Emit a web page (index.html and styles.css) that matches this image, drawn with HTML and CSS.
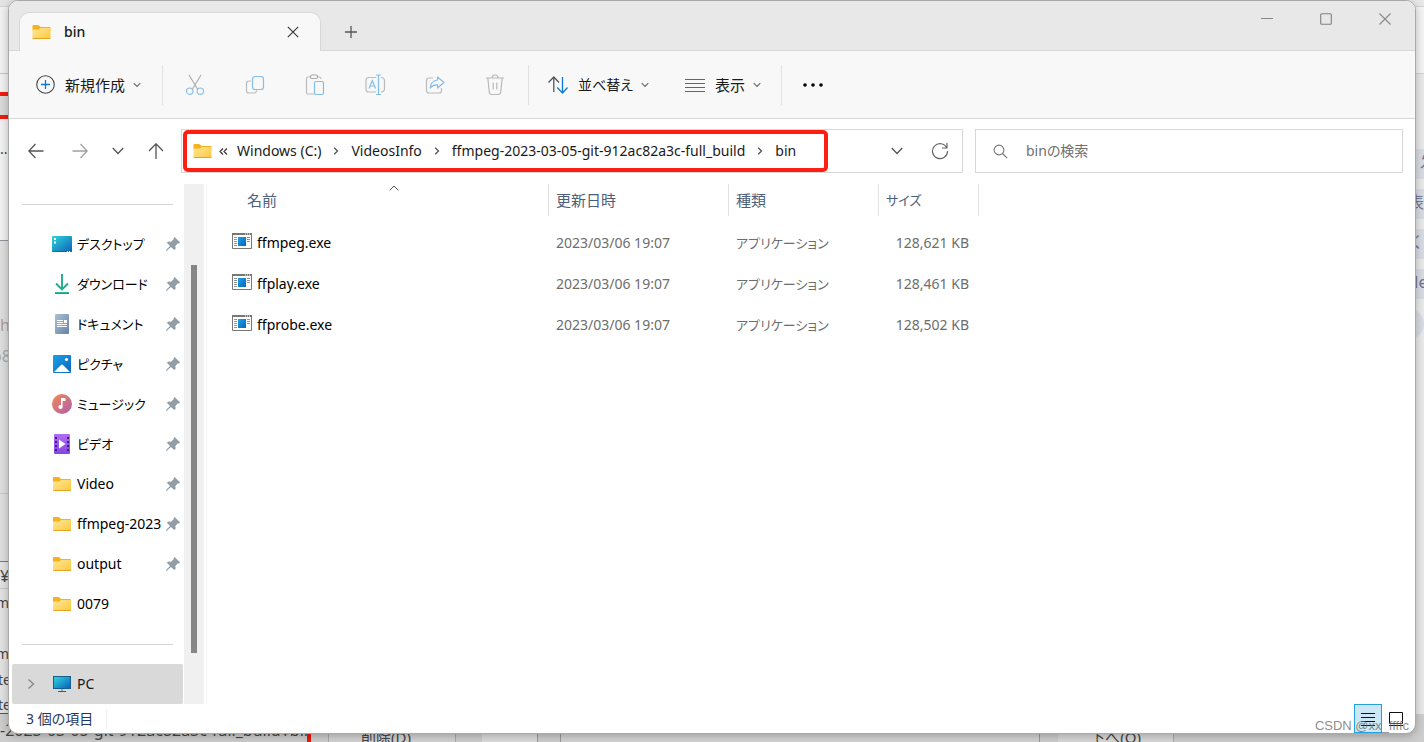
FILE: index.html
```html
<!DOCTYPE html>
<html lang="ja">
<head>
<meta charset="utf-8">
<meta name="viewport" content="width=device-width, initial-scale=1">
<title>bin</title>
<link rel="stylesheet" href="styles.css">
</head>
<body>
<svg class="defs" width="0" height="0" aria-hidden="true">
  <defs>
    <linearGradient id="g-folder" x1="0" y1="0" x2="1" y2="1"><stop offset="0" stop-color="#ffe694"/><stop offset="1" stop-color="#fcc940"/></linearGradient>
    <linearGradient id="g-screen" x1="0" y1="0" x2="1" y2="1"><stop offset="0" stop-color="#2fd3dc"/><stop offset="1" stop-color="#0c62b8"/></linearGradient>
    <linearGradient id="g-down" x1="0" y1="0" x2="0" y2="1"><stop offset="0" stop-color="#33c28c"/><stop offset="1" stop-color="#0d9c94"/></linearGradient>
    <linearGradient id="g-doc" x1="0" y1="0" x2="1" y2="1"><stop offset="0" stop-color="#adc0d6"/><stop offset="1" stop-color="#6583a6"/></linearGradient>
    <linearGradient id="g-pic" x1="0" y1="0" x2="1" y2="1"><stop offset="0" stop-color="#1aa2ea"/><stop offset="1" stop-color="#0b65b8"/></linearGradient>
    <linearGradient id="g-music" x1="0" y1="0" x2="1" y2="1"><stop offset="0" stop-color="#f28b50"/><stop offset="1" stop-color="#b05cae"/></linearGradient>
    <linearGradient id="g-video" x1="0" y1="0" x2="0" y2="1"><stop offset="0" stop-color="#b06cf3"/><stop offset="1" stop-color="#8546e0"/></linearGradient>
    <symbol id="i-folder" viewBox="0 0 18 14"><path d="M0 1q0-1 1-1h4.500q.6 0 1 .5L8 2h9q1 0 1 1v3H0z" fill="#f4b21b"/><path d="M0 4.500h6.500L8 3h9q1 0 1 1v9q0 1-1 1H1q-1 0-1-1z" fill="url(#g-folder)"/><path d="M0 13h18q0 1-1 1H1q-1 0-1-1z" fill="#e6a520"/></symbol>
    <symbol id="i-pin" viewBox="0 0 14 14"><path d="M8.500 0 14 5.300l-.6.900-1.700.2-2.300 2.500.2 2.900-1.200 1.200L4.800 9.900.8 13.800H0V13l4-4L.9 5.700l1.200-1.200 3 .2 2.500-2.400.2-1.600z" fill="#929ea7"/></symbol>
    <symbol id="i-exe" viewBox="0 0 20 16"><path d="M.5 1h19v14.500H.5z" fill="#fff" stroke="#777" stroke-width="1"/><path d="M0 0h20v2H0z" fill="#777"/><path d="M13 1h1m1 0h1m1 0h1" stroke="#fff"/><path d="M2 4.500h3M2 6.500h3M2 8.500h3M2 10.500h3M2 12.500h3M15 4.500h3M15 6.500h3M15 8.500h3" stroke="#929292"/><path d="M6 4h8v9H6z" fill="url(#g-pic)"/></symbol>
    <symbol id="i-down" viewBox="0 0 8 6"><path d="M.7 1.200 4 4.500l3.300-3.300" fill="none" stroke="#666" stroke-width="1.100"/></symbol>
    <symbol id="i-right" viewBox="0 0 6 8"><path d="M1.200.8 4.500 4 1.200 7.200" fill="none" stroke="#555" stroke-width="1.300"/></symbol>
  </defs>
</svg>

<div class="backdrop" aria-hidden="true">
  <div class="edge edge-left">
    <i class="paper"></i><i class="mark"></i><i class="tone"></i><i class="list"></i>
    <i class="rule r1"></i><i class="rule r2"></i><i class="rule r3"></i><i class="redline"></i>
    <span class="t1">..</span><span class="t2">h</span><span class="t3">o8</span><span class="t4">¥</span><span class="t5">m</span><span class="t6">m</span><span class="t7">te</span><span class="t8">te</span>
  </div>
  <div class="edge edge-right">
    <i class="paper"></i>
    <span class="pill p1">发</span><span class="pill p2">表札</span><span class="pill p3">く</span><span class="pill p4">Me</span><span class="pill p5"></span>
  </div>
  <div class="edge edge-bottom">
    <span class="path">-2023-03-05-git-912ac82a3c-full_build¥bin</span>
    <span class="del">削除(D)</span><span class="bar"></span><span class="panel"></span><span class="low">下へ(O)</span>
  </div>
</div>

<main class="window">
  <header class="titlebar">
    <div class="tab">
      <svg class="folder" width="19" height="14"><use href="#i-folder"/></svg>
      <span class="tab-name">bin</span>
      <button class="icon-btn" aria-label="タブを閉じる"><svg width="12" height="12" viewBox="0 0 12 12"><path d="M.8.8l10.400 10.400M11.200.8.800 11.200" stroke="#333" stroke-width="1.100"/></svg></button>
    </div>
    <button class="icon-btn new-tab" aria-label="新しいタブ"><svg width="12" height="12" viewBox="0 0 12 12"><path d="M6 0v12M0 6h12" stroke="#555" stroke-width="1.300"/></svg></button>
    <div class="caption">
      <button class="icon-btn" aria-label="最小化"><svg width="12" height="12" viewBox="0 0 12 12"><path d="M0 5.500h12" stroke="#888"/></svg></button>
      <button class="icon-btn" aria-label="最大化"><svg width="12" height="12" viewBox="0 0 12 12"><rect x=".7" y=".7" width="10.600" height="10.600" rx="1" fill="none" stroke="#808080" stroke-width="1.100"/></svg></button>
      <button class="icon-btn" aria-label="閉じる"><svg width="12" height="12" viewBox="0 0 12 12"><path d="M.5.500l11 11M11.500.5l-11 11" stroke="#888" stroke-width="1.100"/></svg></button>
    </div>
  </header>

  <div class="toolbar">
    <button class="cmd new"><svg width="19" height="19" viewBox="0 0 19 19" fill="none"><circle cx="9.500" cy="9.500" r="8.800" stroke="#444" stroke-width="1.100"/><path d="M9.500 5v9M5 9.500h9" stroke="#0a78d4" stroke-width="1.300"/></svg><span class="kanji">新規作成</span><svg width="8" height="6"><use href="#i-down"/></svg></button>
    <div class="group">
      <button class="tool" aria-label="切り取り"><svg width="20" height="22" viewBox="0 0 20 22" fill="none" stroke-width="1.100"><path d="M4 1l8.500 14M16 1 7.500 15" stroke="#aaa"/><circle cx="4.700" cy="17.200" r="3.200" stroke="#85bdea"/><circle cx="15.300" cy="17.200" r="3.200" stroke="#85bdea"/></svg></button>
      <button class="tool" aria-label="コピー"><svg width="20" height="20" viewBox="0 0 20 20" fill="none" stroke-width="1.200"><path d="M6 6H4Q1.500 6 1.500 8.500v7Q1.500 18 4 18h5q2 0 3-2.500" stroke="#bbb"/><rect x="7.500" y="1.500" width="11" height="13" rx="2.500" stroke="#85bdea"/></svg></button>
      <button class="tool" aria-label="貼り付け"><svg width="20" height="22" viewBox="0 0 20 22" fill="none" stroke-width="1.200"><path d="M9 20H3q-1.500 0-1.500-1.500v-14Q1.500 3 3 3h2.500M13 3h1.500Q16 3 16 5" stroke="#bbb"/><rect x="5.500" y="1" width="7" height="3.500" rx="1.500" stroke="#aaa"/><rect x="9.500" y="7.500" width="9" height="13" rx="1.500" fill="#f8f8f8" stroke="#85bdea"/></svg></button>
      <button class="tool" aria-label="名前の変更"><svg width="22" height="22" viewBox="0 0 22 22" fill="none" stroke-width="1.200"><path d="M12 3.500H4.500Q2 3.500 2 6v9.500Q2 18 4.500 18H12M17 3.500Q20.500 3.500 20.500 7v7.500q0 3.500-3.500 3.500" stroke="#bbb"/><path d="M5 14.500 8.300 6.500l3.200 8M6.200 12h4.200M12 1h5M12 20.500h5M14.500 1v19.500" stroke="#85bdea"/></svg></button>
      <button class="tool" aria-label="共有"><svg width="20" height="20" viewBox="0 0 20 20" fill="none" stroke-width="1.200"><path d="M8 3H4Q1.500 3 1.500 5.500v10Q1.500 18 4 18h10q2.500 0 2.500-2.500V13" stroke="#bbb"/><path d="M12.500 2 19 7.500 12.500 13V9.800Q8 9.500 5.300 13 6 5.500 12.500 5z" stroke="#85bdea" stroke-linejoin="round"/></svg></button>
      <button class="tool" aria-label="削除"><svg width="20" height="22" viewBox="0 0 20 22" fill="none" stroke="#b8b8b8" stroke-width="1.200"><path d="M1 4h18M7 4q0-3 3-3t3 3M2.800 4l1.500 14q.2 2.500 2.500 2.500h6.400q2.300 0 2.500-2.500L17.200 4M8.200 8.500v7M11.800 8.500v7"/></svg></button>
    </div>
    <div class="group-wide">
      <button class="cmd"><svg width="20" height="18" viewBox="0 0 20 18" fill="none" stroke-width="1.300"><path d="M.5 6.500 5.800 1 11 6.500M5.800 1v15" stroke="#555"/><path d="M9.200 11.500l5.300 5.500 5-5.500M14.500 17V1" stroke="#0a78d4"/></svg><span>並べ替え</span><svg width="8" height="6"><use href="#i-down"/></svg></button>
      <button class="cmd"><svg width="20" height="14" viewBox="0 0 20 14"><path d="M0 1.500h20M0 5.500h20M0 9.500h20M0 13.500h20" stroke="#666"/></svg><span class="kanji">表示</span><svg width="8" height="6"><use href="#i-down"/></svg></button>
    </div>
    <button class="icon-btn more" aria-label="もっと見る"><svg width="20" height="4" viewBox="0 0 20 4"><circle cx="2" cy="2" r="1.800"/><circle cx="10" cy="2" r="1.800"/><circle cx="18" cy="2" r="1.800"/></svg></button>
  </div>

  <div class="navrow">
    <div class="history">
      <button class="icon-btn back" aria-label="戻る"><svg width="16" height="16" viewBox="0 0 16 16" fill="none" stroke="#555" stroke-width="1.300"><path d="M15.500 8H1M7.500 1 .8 8l6.700 7"/></svg></button>
      <button class="icon-btn" aria-label="進む"><svg width="16" height="16" viewBox="0 0 16 16" fill="none" stroke="#a0a0a0" stroke-width="1.300"><path d="M.5 8H15M8.500 1l6.700 7-6.700 7"/></svg></button>
      <button class="icon-btn" aria-label="最近の場所"><svg width="12" height="8" viewBox="0 0 12 8" fill="none" stroke="#555" stroke-width="1.300"><path d="M.8 1 6 6.500 11.200 1"/></svg></button>
      <button class="icon-btn" aria-label="上へ"><svg width="16" height="16" viewBox="0 0 16 16" fill="none" stroke="#555" stroke-width="1.300"><path d="M8 16V1M1 8l7-7.200L15 8"/></svg></button>
    </div>
    <div class="address">
      <nav class="crumbs" aria-label="アドレス">
        <svg class="folder" width="19" height="14"><use href="#i-folder"/></svg>
        <svg class="more-left" width="9" height="7" viewBox="0 0 9 7" fill="none" stroke="#333" stroke-width="1.200"><path d="M4 .5 1 3.500l3 3M8 .5 5 3.500l3 3"/></svg>
        <a href="#c">Windows (C:)</a><svg class="sep" width="6" height="8"><use href="#i-right"/></svg>
        <a href="#v">VideosInfo</a><svg class="sep" width="6" height="8"><use href="#i-right"/></svg>
        <a href="#f">ffmpeg-2023-03-05-git-912ac82a3c-full_build</a><svg class="sep" width="6" height="8"><use href="#i-right"/></svg>
        <a href="#bin">bin</a>
      </nav>
      <div class="address-end">
        <button class="icon-btn" aria-label="履歴"><svg width="12" height="8" viewBox="0 0 12 8" fill="none" stroke="#555" stroke-width="1.300"><path d="M.8 1 6 6.500 11.200 1"/></svg></button>
        <button class="icon-btn" aria-label="最新の情報に更新"><svg width="18" height="18" viewBox="0 0 18 18" fill="none" stroke="#666" stroke-width="1.200"><path d="M15.800 6A7.500 7.500 0 1 0 16.500 9M16 1v5h-5"/></svg></button>
      </div>
    </div>
    <label class="search"><svg width="15" height="15" viewBox="0 0 15 15" fill="none" stroke="#777" stroke-width="1.100"><circle cx="6" cy="6" r="4.900"/><path d="M9.500 9.500l4.700 4.700"/></svg><input type="text" placeholder="binの検索" aria-label="binの検索"></label>
  </div>

  <div class="content">
    <nav class="sidebar" aria-label="クイック アクセス">
      <ul class="places">
        <li><a class="kana" href="#1"><svg width="20" height="16" viewBox="0 0 20 16"><rect width="20" height="16" rx="1" fill="url(#g-screen)"/><path d="M2 2h2v2H2zM2 5.500h2v2H2z" fill="#fff"/><path d="M0 15h20v.5H0z" fill="#0b4f8f"/><path d="M15 15.500h1m1 0h1" stroke="#fff"/></svg><span>デスクトップ</span></a><svg width="14" height="14"><use href="#i-pin"/></svg></li>
        <li><a class="kana" href="#2"><svg width="20" height="20" viewBox="0 0 20 20"><path d="M10 0v15M4 9.500l6 6 6-6" fill="none" stroke="#22ac8c" stroke-width="1.900"/><path d="M3 18h14v2H3z" fill="url(#g-down)"/></svg><span>ダウンロード</span></a><svg width="14" height="14"><use href="#i-pin"/></svg></li>
        <li><a class="kana" href="#3"><svg width="20" height="20" viewBox="0 0 20 20"><rect x="3" width="14" height="20" rx="1" fill="url(#g-doc)"/><path d="M5 6.500h6M5 8.500h6M5 10.500h10M5 12.500h10" stroke="#fff" stroke-width="1.100"/><path d="M12 6h3v3h-3z" fill="#fff"/></svg><span>ドキュメント</span></a><svg width="14" height="14"><use href="#i-pin"/></svg></li>
        <li><a class="kana" href="#4"><svg width="20" height="18" viewBox="0 0 20 18"><rect x="1" width="18" height="18" rx="1" fill="url(#g-pic)"/><path d="M2 17l7-7q1-.9 2 0l7 7z" fill="#fff"/><circle cx="14.500" cy="4.500" r="1.600" fill="#fff"/></svg><span>ピクチャ</span></a><svg width="14" height="14"><use href="#i-pin"/></svg></li>
        <li><a class="kana" href="#5"><svg width="20" height="20" viewBox="0 0 20 20"><circle cx="10" cy="10" r="10" fill="url(#g-music)"/><path d="M9.800 4.500v8.500" stroke="#fff" stroke-width="1.500"/><path d="M9.100 4h4.400v3H9.100z" fill="#fff"/><circle cx="8.500" cy="13" r="2.100" fill="#fff"/></svg><span>ミュージック</span></a><svg width="14" height="14"><use href="#i-pin"/></svg></li>
        <li><a class="kana" href="#6"><svg width="20" height="20" viewBox="0 0 20 20"><rect x="2" width="16" height="20" rx="1" fill="url(#g-video)"/><path d="M4 3v15M16 3v15" stroke="#421b83" stroke-width="2" stroke-dasharray="2 2"/><path d="M7 5.500 13.500 10 7 14.500z" fill="#fff"/></svg><span>ビデオ</span></a><svg width="14" height="14"><use href="#i-pin"/></svg></li>
        <li><a href="#7"><svg width="20" height="14"><use href="#i-folder"/></svg><span>Video</span></a><svg width="14" height="14"><use href="#i-pin"/></svg></li>
        <li><a href="#8"><svg width="20" height="14"><use href="#i-folder"/></svg><span>ffmpeg-2023</span></a><svg width="14" height="14"><use href="#i-pin"/></svg></li>
        <li><a href="#9"><svg width="20" height="14"><use href="#i-folder"/></svg><span>output</span></a><svg width="14" height="14"><use href="#i-pin"/></svg></li>
        <li><a href="#10"><svg width="20" height="14"><use href="#i-folder"/></svg><span>0079</span></a></li>
      </ul>
      <a class="pc" href="#pc"><svg width="8" height="12" viewBox="0 0 8 12"><path d="M1.500 1.500 6.500 6l-5 4.500" fill="none" stroke="#888" stroke-width="1.400"/></svg><svg width="20" height="17" viewBox="0 0 20 17"><path d="M1 0h18v13H1z" fill="#155c91"/><path d="M2 1h16v11H2z" fill="url(#g-screen)"/><path d="M9 13h2v2H9z" fill="#9aa"/><path d="M6 15h8v1H6z" fill="#456"/></svg><span>PC</span></a>
    </nav>
    <div class="scroll"><div class="thumb"></div></div>
    <section class="files">
      <table>
        <colgroup><col class="c-name"><col class="c-date"><col class="c-type"><col class="c-size"></colgroup>
        <thead><tr>
          <th class="name"><span class="head kanji">名前</span><svg class="sort" width="10" height="6" viewBox="0 0 10 6"><path d="M.7 5.300 5 1l4.300 4.300" fill="none" stroke="#555"/></svg></th>
          <th><span class="head kanji">更新日時</span></th><th><span class="head kanji">種類</span></th><th><span class="head kana">サイズ</span></th>
        </tr></thead>
        <tbody>
          <tr><td class="file"><svg width="20" height="16"><use href="#i-exe"/></svg><span>ffmpeg.exe</span></td><td>2023/03/06 19:07</td><td class="kana">アプリケーション</td><td class="size">128,621 KB</td></tr>
          <tr><td class="file"><svg width="20" height="16"><use href="#i-exe"/></svg><span>ffplay.exe</span></td><td>2023/03/06 19:07</td><td class="kana">アプリケーション</td><td class="size">128,461 KB</td></tr>
          <tr><td class="file"><svg width="20" height="16"><use href="#i-exe"/></svg><span>ffprobe.exe</span></td><td>2023/03/06 19:07</td><td class="kana">アプリケーション</td><td class="size">128,502 KB</td></tr>
        </tbody>
      </table>
    </section>
  </div>

  <footer class="status">
    <span class="count">3 個の項目</span>
    <div class="views">
      <button class="view on" aria-label="詳細"><svg width="14" height="14" viewBox="0 0 14 14"><path d="M0 1.500h14M0 5.500h14M0 9.500h14M0 13.500h14" stroke="#111"/></svg></button>
      <button class="view" aria-label="大アイコン"><svg width="14" height="14" viewBox="0 0 14 14"><path d="M.5.500h13v11H.5zM0 13.500h14" fill="none" stroke="#111"/></svg></button>
    </div>
  </footer>
</main>
<div class="watermark">CSDN @xx_ffffc</div>
</body>
</html>
```
FILE: styles.css
```css
* { box-sizing: border-box; }
body {
  margin: 0;
  height: 100vh;
  position: relative;
  overflow: hidden;
  background: #dcdcdc;
  color: #1a1a1a;
  font: 14px/20px "Noto Sans", "Noto Sans CJK JP", sans-serif;
  font-feature-settings: "palt";
}
svg { display: block; flex: none; }
.defs { position: absolute; }
button { font: inherit; font-feature-settings: inherit; color: inherit; background: none; border: 0; padding: 0; }
a { color: inherit; text-decoration: none; }
.kanji { font-size: 15px; }
.kana { font-size: 13px; }
.icon-btn { display: flex; align-items: center; justify-content: center; width: 32px; height: 32px; }

/* Pages partly hidden behind the window */
.backdrop, .edge, .edge > * { position: absolute; }
.backdrop { inset: 0; color: #444; }
.edge { overflow: hidden; }
.edge > * { white-space: nowrap; }
.edge-left { left: 0; top: 0; bottom: 0; width: 24px; background: #e4e4e4; }
.edge-left .paper { left: 0; right: 0; top: 6px; height: 234px; background: #f1f1f1; border-top: 1px solid #d4d4d4; }
.edge-left .mark { left: 0; right: 0; top: 92px; height: 27px; background: #dadada; border: solid #f01c0e; border-width: 4px 0; }
.edge-left .tone { left: 0; right: 0; top: 240px; height: 322px; background: #dedede; border-top: 1px solid #8f949c; }
.edge-left .list { left: 0; right: 0; top: 561px; height: 153px; background: #e2e2e2; border-top: 1px solid #777; }
.edge-left .rule { left: 0; right: 0; height: 1px; background: #c6c6c6; }
.r1 { top: 73px; } .r2 { top: 493px; } .r3 { top: 588px; }
.redline { left: 0; right: 0; top: 713px; height: 4px; background: #e8190c; }
.t1 { left: 0; top: 139px; }
.t2 { left: 0; top: 315px; color: #b09c9c; font-size: 16px; }
.t3 { left: -8px; top: 346px; color: #aaa; font-size: 16px; }
.t4 { left: 0; top: 566px; font-size: 16px; }
.t5 { left: -4px; top: 593px; } .t6 { left: -4px; top: 644px; }
.t7 { left: -2px; top: 670px; } .t8 { left: -2px; top: 695px; }
.edge-right { right: 0; top: 0; bottom: 0; width: 24px; background: #e9e9e9; }
.edge-right .paper { left: 0; right: 0; top: 6px; height: 68px; background: #f4f4f4; border: solid #d4d4d4; border-width: 1px 0; }
.pill { left: 0; right: 0; height: 30px; line-height: 26px; font-size: 16px; background: #d8dce2; color: #74748c; }
.p1 { top: 149px; padding-left: 20px; } .p2 { top: 189px; padding-left: 8px; } .p3 { top: 229px; padding-left: 10px; } .p4 { top: 269px; padding-left: 4px; }
.p5 { top: 309px; border-radius: 0 16px 16px 0; }
.edge-bottom { left: 0; right: 0; bottom: 0; height: 28px; background: #cdcdcd; }
.edge-bottom .path { left: 0; top: 6px; width: 311px; height: 22px; border-right: 4px solid #e8190c; font-size: 16px; overflow: hidden; }
.del { left: 328px; top: 0; width: 128px; height: 28px; padding: 13px 0 0 32px; border: solid #aaa; border-width: 0 1px; background: #d2d2d2; font-size: 15px; }
.bar { left: 482px; top: 0; width: 56px; height: 28px; background: #dcdcdc; border-right: 1px solid #999; }
.panel { left: 560px; top: 0; width: 480px; height: 28px; background: #d3d3d3; border: solid #999; border-width: 0 1px; }
.low { left: 1058px; top: 0; width: 116px; height: 28px; padding: 13px 0 0 32px; background: #d8d8d8; border-right: 1px solid #aaa; font-size: 15px; }

.window {
  position: relative;
  display: flex;
  flex-direction: column;
  height: calc(100vh - 8px);
  margin: 0 8px 8px;
  background: #fff;
  border: 1px solid #a9a9a9;
  border-radius: 10px;
  box-shadow: 0 2px 8px rgba(0, 0, 0, .25);
  overflow: hidden;
}

.titlebar { display: flex; height: 50px; padding-left: 10px; background: #e8e8e8; border-bottom: 1px solid #d8d8d8; }
.tab { display: flex; align-items: center; width: 302px; height: 39px; margin-top: 11px; padding: 0 11px 0 12px; background: #f8f8f8; border: 1px solid #d8d8d8; border-bottom: 0; border-radius: 10px 10px 0 0; }
.tab-name { flex: 1; margin-left: 13px; font-weight: 500; }
.new-tab { margin: 15px 0 0 14px; }
.caption { display: flex; gap: 27px; margin: 2px 14px 0 auto; }

.toolbar { display: flex; align-items: center; height: 68px; padding-left: 27px; background: #f8f8f8; border-bottom: 1px solid #d8d8d8; }
.cmd { display: flex; align-items: center; gap: 10px; height: 40px; }
.cmd svg:last-child { margin-left: -2px; }
.new { width: 126px; }
.group { display: flex; gap: 28px; padding: 4px 17px 4px 16px; border: solid #e2e2e2; border-width: 0 1px; }
.tool { display: flex; align-items: center; justify-content: center; width: 32px; height: 32px; }
.group-wide { display: flex; gap: 36px; padding: 0 20px 0 19px; border-right: 1px solid #e2e2e2; }
.more { margin-left: 15px; }

.navrow { display: grid; grid-template-columns: 161px minmax(0, 782fr) minmax(0, 440fr); height: 65px; padding: 10px 12px 0 11px; }
.history { display: flex; align-items: center; gap: 6px; height: 44px; }
.back { margin-right: 6px; }
.address { display: flex; height: 44px; border: 1px solid #d8d8d8; padding-left: 1px; }
.crumbs { display: flex; align-items: center; gap: 12px; padding: 0 28px 0 6px; border: 4px solid #ff1f12; border-radius: 5px; white-space: nowrap; }
.crumbs .folder { margin-right: -5px; }
.more-left { margin-right: -3px; }
.address-end { display: flex; align-items: center; gap: 11px; margin-left: auto; padding-right: 6px; }
.search { display: flex; align-items: center; gap: 18px; margin-left: 12px; height: 44px; padding: 0 17px; border: 1px solid #d8d8d8; }
.search input { flex: 1; min-width: 0; padding: 0; border: 0; outline: 0; background: none; font: inherit; font-feature-settings: inherit; }
.search input::placeholder { color: #707070; opacity: 1; }

.content { display: flex; flex: 1; min-height: 0; }
.sidebar { width: 175px; flex: none; padding: 20px 1px 0 3px; }
.places { margin: 0 10px; padding: 19px 0 20px; border: solid #d4d4d4; border-width: 1px 0; list-style: none; }
.places li { display: flex; align-items: center; height: 40px; margin-right: -7px; padding-left: 30px; color: #000; }
.places a { display: flex; flex: 1; align-items: center; gap: 5px; white-space: nowrap; }
.pc { display: flex; align-items: center; height: 40px; margin-top: 19px; padding-left: 15px; background: #d9d9d9; border-radius: 2px; }
.pc svg + svg { margin: 0 5px 0 17px; }
.scroll { flex: none; width: 20px; padding: 81px 7px 51px; background: #f0f0f0; }
.thumb { height: 100%; background: #868686; }
.files { flex: 1; margin-left: 2px; padding-left: 22px; border-left: 1px solid #f2f2f2; }
table { width: 750px; table-layout: fixed; border-collapse: collapse; color: #6d6d6d; }
.c-name { width: 320px; } .c-date { width: 180px; } .c-type { width: 150px; } .c-size { width: 100px; }
th { position: relative; height: 38px; padding: 0; font-weight: 400; text-align: left; vertical-align: top; color: #4c607a; }
.head { display: block; height: 32px; padding-left: 7px; line-height: 32px; border-right: 1px solid #e2e2e2; }
.name .head { padding-left: 18px; }
.sort { position: absolute; left: 160px; top: 1px; }
td { height: 41px; padding: 0 0 0 7px; }
.file { display: flex; align-items: center; gap: 5px; padding-left: 3px; color: #000; }
.file svg { margin-bottom: 3px; }
.size { text-align: right; padding-right: 10px; }

.status { display: flex; align-items: center; justify-content: space-between; height: 29px; padding: 0 5px 0 17px; color: #1e395b; }
.count { padding-right: 13px; border-right: 1px solid #eee; }
.views { display: flex; }
.view { display: flex; align-items: center; justify-content: center; width: 28px; height: 29px; border: 1px solid transparent; }
.view.on { background: #cce8f7; border-color: #26a0da; }
.watermark { position: absolute; right: 15px; bottom: 6px; font: 13px/20px "Liberation Sans", sans-serif; color: rgba(110, 110, 110, .8); }
```
